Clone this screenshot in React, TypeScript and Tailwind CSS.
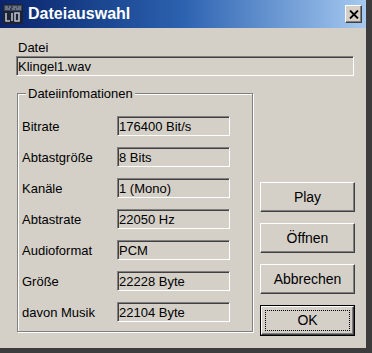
import React from "react";

const font = "font-['Liberation_Sans',Arial,sans-serif]";

const sunken =
  "border border-t-[#808080] border-l-[#808080] border-b-white border-r-white shadow-[inset_1px_1px_0_#404040]";

const raised =
  "border border-t-white border-l-white border-b-[#404040] border-r-[#404040] shadow-[inset_-1px_-1px_0_#808080]";

const infos: [string, string][] = [
  ["Bitrate", "176400 Bit/s"],
  ["Abtastgröße", "8 Bits"],
  ["Kanäle", "1 (Mono)"],
  ["Abtastrate", "22050 Hz"],
  ["Audioformat", "PCM"],
  ["Größe", "22228 Byte"],
  ["davon Musik", "22104 Byte"],
];

function TitleIcon() {
  return (
    <svg width="20" height="20" viewBox="0 0 20 20" className="shrink-0">
      <rect width="20" height="20" fill="#1c2433" />
      <rect x="1" y="1" width="18" height="6" fill="#3b4456" />
      <path d="M2 3h3M6 3h2M10 3h4M15 3h3M2 5h5M9 5h3M13 5h5" stroke="#9aa3b4" strokeWidth="1" />
      <path d="M3 9v8h4M9 9v8M12 9h4v8h-4z" stroke="#b9bfca" strokeWidth="1.6" fill="none" />
    </svg>
  );
}

function CloseButton() {
  return (
    <div className={`w-[17px] h-[18px] bg-[#d4d0c8] flex items-center justify-center ${raised}`}>
      <svg width="10" height="9" viewBox="0 0 10 9">
        <path d="M1 0.5L9 8.5M9 0.5L1 8.5" stroke="#000" strokeWidth="1.8" />
      </svg>
    </div>
  );
}

function Button({ label, isDefault }: { label: string; isDefault?: boolean }) {
  if (isDefault) {
    return (
      <div className="w-[95px] h-[31px] border border-black">
        <div className={`h-full bg-[#d4d0c8] flex p-[3px] ${raised}`}>
          <div className="flex-1 flex items-center justify-center border border-dotted border-black text-[14px] text-black">
            {label}
          </div>
        </div>
      </div>
    );
  }
  return (
    <div className={`w-[95px] h-[30px] bg-[#d4d0c8] flex items-center justify-center text-[14px] text-black ${raised}`}>
      {label}
    </div>
  );
}

export default function App() {
  return (
    <div className={`w-[372px] h-[353px] flex flex-col bg-[#d4d0c8] border-r-[6px] border-b-[5px] border-[#3c3c3c] ${font}`}>
      {/* title bar */}
      <div className="h-[28px] shrink-0 flex items-center pl-[3px] pr-[4px] bg-linear-to-r from-[#0a246a] via-[#2c62b0] to-[#a6caf0]">
        <TitleIcon />
        <span className="ml-[5px] text-white font-bold text-[16px] leading-none">Dateiauswahl</span>
        <div className="ml-auto">
          <CloseButton />
        </div>
      </div>

      {/* body */}
      <div className="flex flex-col pl-[16px] pt-[12px] text-[13px] leading-[15px] text-black">
        <div className="pl-[2px]">Datei</div>
        <div className={`mt-[1px] w-[338px] h-[20px] flex items-center pl-[1px] ${sunken}`}>Klingel1.wav</div>

        <div className="mt-[10px] flex">
          <fieldset className="ml-[1px] w-[236px] h-[246px] border border-[#808080] shadow-[inset_1px_1px_0_#fff,1px_1px_0_#fff] pl-[4px] pt-[15px]">
            <legend className="ml-[4px] px-[2px] bg-[#d4d0c8]">Dateiinfomationen</legend>
            <div className="flex flex-col gap-[11px]">
              {infos.map(([k, v]) => (
                <div key={k} className="flex items-center h-[20px]">
                  <span className="w-[95px]">{k}</span>
                  <div className={`w-[113px] h-[20px] flex items-center pl-[1px] ${sunken}`}>{v}</div>
                </div>
              ))}
            </div>
          </fieldset>

          <div className="ml-[7px] mt-[96px] flex flex-col gap-[11px]">
            <Button label="Play" />
            <Button label="Öffnen" />
            <Button label="Abbrechen" />
            <Button label="OK" isDefault />
          </div>
        </div>
      </div>
    </div>
  );
}
